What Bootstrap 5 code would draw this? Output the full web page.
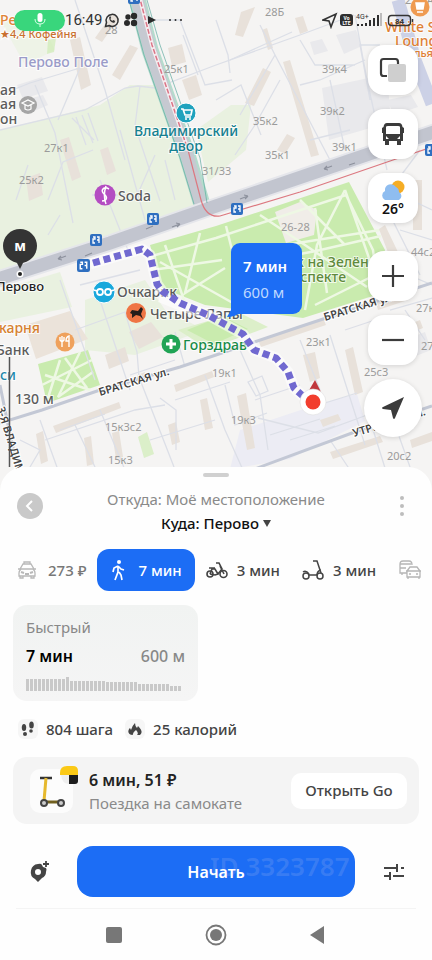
<!DOCTYPE html>
<html lang="ru">
<head>
<meta charset="utf-8">
<meta name="viewport" content="width=device-width, initial-scale=1">
<title>Маршрут до Перово</title>
<link href="https://cdn.jsdelivr.net/npm/bootstrap@5.3.0/dist/css/bootstrap.min.css" rel="stylesheet">
<style>
body{font-family:"Noto Sans","Open Sans",sans-serif;background:#fefefe;color:#111}
button{font-family:inherit}
svg{display:block}
.map-area{min-height:491px}
.map-area>svg{position:absolute;top:0;left:0}
.status-bar{top:8px;left:14px;right:18px;height:24px;font-family:Roboto,"Noto Sans",sans-serif;font-size:15px;color:#333}
.status-icons{margin-left:2px}
.mic{width:51px;height:21px;border-radius:11px;background:#39d67c}
.controls{top:45px;right:10px;gap:14px}
.ctl{width:50px;height:50px;border-radius:16px;background:#fff;border:0;padding:0;box-shadow:0 1px 5px rgba(0,0,0,.14)}
.ctl-round{width:58px;height:58px;border-radius:50%}
.zoom-in{margin-top:14px}
.temp{font-size:14px;line-height:16px;font-weight:600;color:#111}
.callout{left:231px;top:243px;width:71px;height:71px;border-radius:9px 9px 9px 0;background:#1c6df5;color:#fff;font-size:15px;line-height:26px;padding-left:12px;padding-top:10px}
.callout span:first-child{font-weight:600}
.callout span:last-child{color:#bfd9ff}
.sheet{margin-top:-24px;border-radius:24px 24px 0 0;background:#fefefe;padding-top:6px}
.grip{width:26px;height:4px;border-radius:2px;background:#d0d0d0}
.route-head{margin-top:10px;padding:0 17px}
.from-line{font-size:15px;line-height:24px;color:#8a8a8a}
.to-line{font-size:15px;line-height:24px;font-weight:500;color:#111}
.back{width:26px;height:26px;margin-top:6px;border-radius:50%;background:#c9c9c9;border:0;padding:0}
.more{margin-top:7px}
.modes{margin-top:14px;padding-left:6px}
.mode{height:42px;padding:0 11px;border:0;background:none;font-size:15px;font-weight:500;color:#444;border-radius:12px;gap:9px}
.mode-on{background:#1c6df5;color:#fff;padding:0 13px;gap:12px}
.pale{color:#777;gap:11px}
.opt{width:185px;height:96px;margin:14px 13px 0;padding:10px 13px;border:0;border-radius:14px;background:linear-gradient(#f1f3f2,#f5f5f5);text-align:left}
.opt-name{font-size:15px;line-height:24px;color:#888}
.opt-row{margin-top:4px;font-size:16px;line-height:26px}
.opt-time{font-weight:600}
.opt-dist{color:#888;font-weight:500}
.bars{height:14px;margin-top:8px;gap:1px}
.bars i{width:3px;background:#c9c9c9}
.stats{margin-top:16px;padding:0 18px;gap:8px;font-size:15px;line-height:24px;font-weight:500;color:#444}
.chip{width:20px;height:20px;border-radius:6px;background:#f6f6f6}
.chip-next{margin-left:4px}
.ride{margin:16px 13px 0;height:67px;border-radius:14px;background:#f4f4f4;padding:0 12px 0 17px}
.thumb{width:43px;height:44px;border-radius:10px;background:#fcfcfc}
.thumb-badge{top:-3px;right:-5px}
.ride-title{font-size:16px;line-height:24px;font-weight:600;color:#222}
.ride-sub{font-size:15px;line-height:22px;color:#8a8a8a}
.go{height:36px;width:116px;border:0;border-radius:10px;background:#fff;font-size:15px;font-weight:500;color:#444;padding:0}
.actions{margin-top:22px;padding:0 13px;gap:13px}
.side{width:51px;height:51px;border:0;background:none;padding:0}
.start{height:51px;border:0;border-radius:16px;background:#1c6df5;color:#fff;font-size:16px;font-weight:600}
.stamp{left:133px;top:0;font-size:26px;line-height:41px;font-weight:600;color:rgba(110,155,240,.36);white-space:nowrap}
.sys{margin:11px 16px 0;height:52px;border-top:1px solid #f4f4f4;gap:80px}
.sys button{border:0;background:none;padding:0}
.house{font-size:11px;fill:#9b9b9b}
.poi{font-size:14px;font-weight:500;stroke:#fff;stroke-width:2px;stroke-opacity:.75;paint-order:stroke}
.poi-small{font-size:11px}
.poi-station{font-size:13px}
.street{font-size:11px;font-weight:600;fill:#444;stroke:#fff;stroke-width:2px;paint-order:stroke}
</style>
<script src="https://cdn.jsdelivr.net/npm/bootstrap@5.3.0/dist/js/bootstrap.bundle.min.js" defer></script>
</head>
<body>
<main class="d-flex flex-column min-vh-100">
<section class="map-area position-relative flex-grow-1 overflow-hidden" aria-label="Карта">
<svg width="100%" height="100%" viewBox="0 0 432 491" preserveAspectRatio="xMidYMin slice" role="img" aria-label="Пешеходный маршрут к метро Перово">
<defs><symbol id="stop" viewBox="0 0 12 12"><rect width="12" height="12" rx="2" fill="#2f6fc0"/><path d="M3 3h2v2H3v4h2M7 3h2v6M7 6h2" stroke="#fff" stroke-width="1.3" fill="none"/></symbol></defs>
<rect width="432" height="491" fill="#f5f4f3"/>
<!-- soft green blocks -->
<g fill="#e9f1e0">
<path d="M0 130L100 105 130 85 155 85 197 208 0 270z"/><path d="M196 130l35-25 20 0-5 45-38 32z"/>
<path d="M0 290l60-18 12 35-72 15z"/><path d="M85 300l60-20 20 30 40 20-70 25-50-5z"/>
<path d="M0 20h40l15 30-30 15z" opacity=".6"/><path d="M178 330l60-18 30 15-60 22z" fill="#dcefc9"/>
</g>
<path d="M25 325l45-14 18 28-52 20z" fill="#ebe3da"/>
<path d="M240 430l85-28 32-8 8 27-75 38-60 10z" fill="#ececf4"/>
<!-- parks -->
<g fill="#c9ebae"><path d="M150 245L216 226 349 182 385 250 376 295 303 318 205 305 162 288z"/><path d="M38 364l50-14 12 35-53 18z"/><path d="M187 330l35-14 26 13-34 15z"/><path d="M138 437l9-5 7 22-10 4zM48 40l8-2-2 14-7 2z" opacity=".6"/></g>
<path d="M275 212l25-10 17 8-3 25-28 8z" fill="#f0ede8"/>
<g stroke="#eef8e4" stroke-width="2.5" fill="none">
<path d="M152 256l64-18 130-43 27 55 5 35M160 262l80 45M165 245l20 58M200 233l-15 60 40-25M226 226l10 40 80-15 65-15M315 208l12 85M345 190l-28 55-12 65M260 215l45 30 62 42M285 245l95-15M345 190l30 85-60 30M152 270l70-10M300 200l45 45"/>
<path d="M45 375l45 15M60 360l-12 38M80 352l-22 45 35-25M42 385l50-25M65 358l22 30"/>
</g>
<!-- buildings -->
<g fill="#e8e1da">
<path d="M26 178l14-5 3 22-14 6zM70 40l10-3 11 48-10 5zM112 75l18-30 8 3-18 32zM95 38l17-24 7 4-17 24zM168 48l14-4 4 18-14 4zM182 80l14-5 6 20-13 5zM60 140l9-3 12 40-9 4zM100 150l8-3 8 24-9 4z"/>
<path d="M245 103l18-35 8 4-17 34zM283 62l7-2 29 95-8 2zM241 12l14-5-12 30-8-2zM295 18l8-2 5 15-8 3zM277 150l10-16 8 4-10 16zM262 30l5-2 6 20-5 2z"/>
<path d="M53 426l66-24 2 6-65 25zM174 385l38-14 2 6-38 15zM129 332l22-10 12 15-24 12zM36 434l7-3 5 30-7 3zM84 438l7-2 3 28-7 2zM112 433l7-2 4 26-7 2zM168 425l8-3 4 20-8 3zM133 377l12-5 3 8-12 5zM105 355l20-8 4 14-20 8z"/>
<path d="M237 396l9-3 9 55-8 2zM258 340l65-22 3 7-65 22zM303 355l12-3 5 26-10 4zM345 350l8-3 10 45-8 3zM200 400l7-2 6 30-8 2zM320 420l18-6 3 6-18 7zM330 452l50-16 3 6-50 17zM370 448l40-12M385 225l12 25 16 40-8 3-16-38-10-26zM413 180h9v50h-9zM375 300l30-10 3 10-30 10zM395 330l25-10 3 8-25 10zM410 440l22-8v9l-20 7z"/>
</g>
<g fill="#e9e9ec"><path d="M336 35l20-5 6 16-18 8zM310 42l12-3 6 12-14 4zM322 88l65-14 4 48-62 18zM17 85l25-8 6 14-25 8zM25 100l18-5 5 10-18 8zM405 340l20-8 6 18-20 8zM387 100l24-5 7 12-24 8z"/></g>
<!-- yard lanes -->
<g stroke="#dcdfe7" stroke-width="1.3" fill="none">
<path d="M0 130L85 110 125 88 138 86 155 88 216 65 300 35 354 15M0 95l30-12 50-15M75 0l30 90 20 70M80 68l-22 52M35 85l20 48 18 90M140 86l-5 40 25 75M150 20l30 0 25 65 27-5M183 35l15 40"/>
<path d="M72 118l22 22M76 117l10 28M82 115l11 28M88 113l10 28"/>
<path d="M48 200l15-38 30-12M16 200l12-35M60 215l-12 20M100 180l30 75M120 130l25 90M155 155l-20 45M165 160l10 40M92 195l35 0"/>
<path d="M216 20l12 35 2 18M260 25l15 30 55 105M275 55l-35 60M300 40l15 25 40 0M355 15l12 65 20 90M300 85l20-5 45-20M380 45l-20 0 10 55M280 80l-25 45-20 30M330 80l15 70M230 60l62-28M310 140l40-10M216 100l25-15 20 50M390 175l0 40 30 60M420 150l-30 40 42 20M400 230l32 10M385 265l47 20M390 310l42-12M405 310l20 30"/>
<path d="M60 280l35 100M75 330l50-18 12 40 2 25 35 90M100 300l30 90M130 375l45-15M80 285l60-15M40 420l18 50M60 430l45-16M75 425l20 42M100 410l25 60M45 440l90-30 30-5M150 440l65-20M175 400l55-18M160 398l16 12 0 40M20 440l20 10-10 17M185 367l-10-35M205 375l20 55 18 40M225 385l10 40 32-12M240 350l20 45 8 55M248 382l14-6 6 15-12 5zM330 335l35 110M345 330l30-10M255 400l45-15M258 418l60 15 60-22M325 403l32-10M270 435l50-16M290 440l45-14M330 440l20 30M370 420l15 48M395 425l15 42M300 340l20 50"/>
</g>
<g stroke="#c3c8d5" stroke-width="3" fill="none"><path d="M0 423L42 410 100 390 180 367 216 355 296 328 432 283"/><path d="M252 470L352 433 432 406M0 385L8 425 18 470"/></g>
<!-- avenues -->
<path d="M398 0L415 60 432 104" stroke="#ccd1e6" stroke-width="13" fill="none"/>
<path d="M136 -5L150 50 187 155 203 208" stroke="#b4dccd" stroke-width="17" fill="none"/>
<path d="M136 -5L150 50 187 155 203 212" stroke="#c6c9d1" stroke-width="13" fill="none"/>
<path d="M-5 280L110 243 216 206 369 154 440 130" stroke="#e5e6eb" stroke-width="17" fill="none"/>
<path d="M-5 280L110 243 216 206 369 154 440 130" stroke="#c2c5cf" stroke-width="13" fill="none"/>
<path d="M139 -5L152 45 188 150" stroke="#f4edf0" stroke-width="4" fill="none"/>
<path d="M139 -5L152 45 188 150" stroke="#dc7486" stroke-width="1.5" stroke-dasharray="5 2" fill="none"/>
<path d="M188 150L201 200Q206 218 220 216L300 192 393 160 432 147" stroke="#dc7880" stroke-width="1.2" fill="none"/>
<path d="M147 0L160 45 200 158 207 203" stroke="#5eaaa0" stroke-width=".7" fill="none"/><path d="M129 0L144 55 180 158 194 204" stroke="#5eaaa0" stroke-width=".7" fill="none"/>
<g stroke="#8d919d" stroke-width="1.2" fill="none"><path d="M58 259l8-3m-8 3l3-3m-3 3l4 1M172 227l8-3m0 0l-4-1m4 1l-3 3M324 169l8-3m-8 3l3-3m-3 3l4 1M240 199l8-3m0 0l-4-1m4 1l-3 3M85 256l7-3M146 229l7-3M349 165l6-2"/></g>
<use href="#stop" x="128" y="-8" width="12" height="12"/><use href="#stop" x="147" y="213" width="12" height="12"/><use href="#stop" x="90" y="234" width="12" height="12"/><use href="#stop" x="231" y="203" width="12" height="12"/><use href="#stop" x="425" y="144" width="12" height="12"/>
<!-- house numbers -->
<g class="house">
<text x="105" y="34">28</text><text x="265" y="16">28Б</text><text x="164" y="73">25к1</text><text x="44" y="152">27к1</text><text x="19" y="184">25к2</text><text x="202" y="175">31/33</text><text x="322" y="73">39к4</text><text x="320" y="115">39к2</text><text x="253" y="125">35к2</text><text x="265" y="159">35к1</text><text x="332" y="151">39к1</text><text x="281" y="231">26-28</text><text x="411" y="256">44с2</text><text x="306" y="346">23к1</text><text x="212" y="377">19к1</text><text x="364" y="376">25с3</text><text x="231" y="424">19к3</text><text x="105" y="431">15к3с2</text><text x="108" y="464">15к3</text><text x="387" y="460">20с2</text><text x="416" y="312">27к4</text><text x="421" y="350">27</text><text x="405" y="4">2 18А</text>
</g>
<!-- streets -->
<g class="street"><text transform="translate(100 396) rotate(-17)">БРАТСКАЯ ул.</text><text transform="translate(325 321) rotate(-17)">БРАТСКАЯ ул.</text><text transform="translate(354 437) rotate(-17)">УТРЕННЯЯ ул.</text><text transform="translate(-3 408) rotate(73)">3-Я ВЛАДИМИРСКАЯ</text></g>
<!-- places -->
<g class="poi">
<text x="0" y="25" fill="#e08338">Ре</text><text x="0" y="38" fill="#c9702f" class="poi-small">★4,4 Кофейня</text>
<text x="18" y="67" fill="#9a9bc8">Перово Поле</text>
<g fill="#5b5b5b"><text x="0" y="95">ая</text><text x="0" y="109">ая</text><text x="0" y="124">он</text><text x="118" y="201">Soda</text><text x="117" y="297">Очкарик</text><text x="150" y="319">Четыре Лапы</text><text x="-4" y="355">Банк</text></g>
<g fill="#15808f" text-anchor="middle"><text x="186" y="136">Владимирский</text><text x="186" y="151">двор</text></g>
<text x="0" y="380" fill="#1c87ab">си</text><text x="-1" y="333" fill="#d6802f">карня</text><text x="183" y="350" fill="#188b47">Горздрав</text>
<g fill="#5f8a3c"><text x="269" y="267">Парк на Зелёном</text><text x="346" y="282" text-anchor="end">проспекте</text></g>
<g fill="#df8034"><text x="385" y="32">White Story</text><text x="395" y="46">Lounge</text><text x="414" y="57" class="poi-small">лья</text></g>
</g>
<!-- walking route -->
<g fill="none" stroke-linejoin="round"><path d="M90 264L142 249 150 255 157 284 162 291M160 297L180 305 208 315 228 326 243 334 254 350 276 358 288 372 294 388 304 397" stroke="#fff" stroke-width="11" stroke-opacity=".55"/><path d="M93 263L142 249 150 255 157 284 162 291 180 303 208 315 228 326 243 334 254 350 276 358 288 372 294 388 304 397" stroke="#7169d0" stroke-width="7" stroke-dasharray="7 4"/></g>
<use href="#stop" x="77" y="259" width="13" height="13"/>
<!-- place marks -->
<circle cx="28" cy="105" r="9" fill="#a5a5a5"/><path d="M22 103l6-3 6 3-6 3zM25 105v4q3 2 6 0v-4" fill="none" stroke="#fff" stroke-width="1.2"/>
<circle cx="186" cy="113" r="10" fill="#1fa2bd" stroke="#fff"/><path d="M181 109h2l2 6h6l1-5h-8M185 117h6" stroke="#fff" stroke-width="1.7" fill="none"/><circle cx="186" cy="119" r="1" fill="#fff"/><circle cx="190" cy="119" r="1" fill="#fff"/>
<circle cx="105" cy="195" r="10.500" fill="#b44dc2"/><path d="M109 189c-5-3-9 1-5 5 4 3 3 7-2 7M106 186c-2 6-2 13 0 18" stroke="#fff" stroke-width="1.5" fill="none"/>
<circle cx="104" cy="292" r="11" fill="#18a8dc" stroke="#fff"/><g fill="none" stroke="#fff" stroke-width="1.8"><circle cx="100" cy="292" r="3"/><circle cx="108" cy="292" r="3"/><path d="M94 290l3 1M114 290l-3 1"/></g>
<circle cx="136" cy="313" r="10" fill="#ef7544"/><path d="M130 313l2-3 6 1 3-4 2 2-2 5 2 5-3-3-4-1-4 3v-4z" fill="#251c1a"/>
<circle cx="171" cy="344" r="9.500" fill="#20a455"/><path d="M171 339v10M166 344h10" stroke="#fff" stroke-width="3"/>
<circle cx="65" cy="342" r="9.500" fill="#efa15c"/><path d="M62 336v11M60 337v3q2 3 4 0v-3M69 347v-11q-3 1-3 5h3" stroke="#fff" stroke-width="1.4" fill="none"/>
<circle cx="420" cy="7" r="9.500" fill="#ef9b51"/><path d="M416 3h8l-1 6h-6zM417 12h6" stroke="#fff" stroke-width="1.5" fill="#fff"/>
<!-- metro pin -->
<circle cx="20" cy="246" r="17" fill="#343434"/><path d="M16 261l4 8 4-8" fill="#343434"/><text x="20" y="251" text-anchor="middle" font-size="14" font-weight="700" fill="#fff">м</text><circle cx="20" cy="274" r="3.500" fill="#fff"/><circle cx="20" cy="274" r="2" fill="#222"/>
<text x="-4" y="291" class="poi poi-station" fill="#222">Перово</text>
<!-- scale -->
<path d="M9.500 357v110" stroke="#555" stroke-width="1.5"/><text x="15" y="404" class="poi" fill="#5b5b5b">130 м</text>
<!-- current position -->
<path d="M315 380l-7 12h13z" fill="#c0373c"/><circle cx="313" cy="402" r="13" fill="#fff" stroke="#ddd" stroke-width=".6"/><circle cx="313" cy="402" r="7.500" fill="#f23e2e"/>
<path d="M231 302v8l-4 7q8 0 12-4z" fill="#1c6df5"/>
</svg>
<div class="callout position-absolute d-flex flex-column"><span>7 мин</span><span>600 м</span></div>
<div class="status-bar position-absolute d-flex align-items-center">
<span class="mic d-flex align-items-center justify-content-center"><svg width="12" height="14" viewBox="0 0 12 14"><rect x="3.500" width="5" height="9" rx="2.500" fill="#fff"/><path d="M1 6q0 5 5 5t5-5M6 11v3" stroke="#d8ffe8" fill="none"/></svg></span>
<span>16:49</span>
<svg class="status-icons" width="80" height="16" viewBox="0 0 80 16"><path d="M1.500 14.500l1-4a6 6 0 1 1 2.500 3z" fill="none" stroke="#333" stroke-width="1.500"/><path d="M5.200 5q-.5 5 5 6l1-2-2-1-1 1-2-2 1-1-1-2z" fill="#333"/><g fill="#2a2a2a"><circle cx="24" cy="5" r="2.700"/><circle cx="30" cy="4" r="3.200"/><circle cx="23" cy="11" r="3"/><circle cx="30" cy="11" r="3.200"/><path d="M44 4l8 4-8 4z"/><circle cx="66" cy="8" r="1"/><circle cx="71.500" cy="8" r="1"/><circle cx="77" cy="8" r="1"/></g></svg>
<svg class="ms-auto" width="92" height="18" viewBox="0 0 92 18"><path d="M1 9L14 3 9 16 7 10z" fill="none" stroke="#333" stroke-width="1.600"/><rect x="18" y="3" width="13" height="12" rx="3" fill="#2e2e2e"/><text x="24.500" y="8.500" font-size="5" font-weight="700" fill="#fff" text-anchor="middle">Vo</text><text x="24.500" y="13.500" font-size="5" font-weight="700" fill="#fff" text-anchor="middle">LTE</text><text x="34" y="8" font-size="7" fill="#333">4G+</text><path d="M36 15v-2M40 15v-2M44 15v-3M48 15V9M52 15V7M56 15V4" stroke="#2e2e2e" stroke-width="2"/><path d="M59 15V2" stroke="#aaa" stroke-width="1.500"/><rect x="66.500" y="4.500" width="22" height="10" rx="3" fill="none" stroke="#333" stroke-width="1.400"/><path d="M90.500 8v3" stroke="#333" stroke-width="1.500"/><text x="77.500" y="12.500" font-size="8" font-weight="700" fill="#333" text-anchor="middle">84</text></svg>
</div>
<div class="controls position-absolute d-flex flex-column align-items-center">
<button class="ctl d-grid" aria-label="Слои"><svg class="m-auto" width="28" height="28" viewBox="0 0 28 28"><rect x="9" y="8" width="18" height="18" rx="2" fill="#cfcfcf"/><path d="M8 20H4.500Q2 20 2 17.500v-12Q2 3 4.500 3h12Q19 3 19 6v2" fill="none" stroke="#3b3b3b" stroke-width="2.200"/></svg></button>
<button class="ctl d-grid" aria-label="Транспорт"><svg class="m-auto" width="24" height="24" viewBox="0 0 24 24"><path fill-rule="evenodd" fill="#3b3b3b" d="M6 1h12q3 0 3.500 4L23 6v5h-1v8h-2v4h-4v-4H8v4H4v-4H2v-8H1V6l1.500-1Q3 1 6 1zM5 5v7h14V5q0-1-2-1H7Q5 4 5 5zM5 14v3h3zM19 14v3h-3z"/></svg></button>
<button class="ctl d-flex flex-column align-items-center justify-content-center" aria-label="Погода, 26 градусов"><svg width="26" height="21" viewBox="0 0 26 21"><circle cx="18" cy="7" r="6.500" fill="#f5ad25"/><path d="M5 20a5 5 0 0 1 0-9 6 6 0 0 1 11-4 5.500 5.500 0 0 1 3 5 4.500 4.500 0 0 1 0 8z" fill="#8fbdf0"/></svg><span class="temp">26°</span></button>
<button class="ctl zoom-in d-grid" aria-label="Приблизить"><svg class="m-auto" width="24" height="24" viewBox="0 0 24 24"><path d="M12 1v22M1 12h22" stroke="#3b3b3b" stroke-width="2.200"/></svg></button>
<button class="ctl d-grid" aria-label="Отдалить"><svg class="m-auto" width="24" height="24" viewBox="0 0 24 24"><path d="M1 12h22" stroke="#3b3b3b" stroke-width="2.200"/></svg></button>
<button class="ctl ctl-round d-grid" aria-label="Моё местоположение"><svg class="m-auto" width="24" height="24" viewBox="0 0 24 24"><path d="M23 1L2 11q-2 1 0 2l8 1 2 8q1 2 2 0z" fill="#3b3b3b"/></svg></button>
</div>
</section>

<section class="sheet position-relative">
<div class="grip mx-auto"></div>
<header class="route-head d-flex align-items-start justify-content-between">
<button class="back d-grid" aria-label="Назад"><svg class="m-auto" width="10" height="12" viewBox="0 0 10 12"><path d="M7 1L2 6l5 5" fill="none" stroke="#fff" stroke-width="2"/></svg></button>
<div class="text-center"><div class="from-line">Откуда: Моё местоположение</div><div class="to-line">Куда: Перово <svg class="d-inline" width="8" height="16" viewBox="0 0 8 16"><path d="M0 3h8l-4 7z" fill="#444"/></svg></div></div>
<button class="more btn p-0 border-0" aria-label="Ещё"><svg width="26" height="24" viewBox="0 0 26 24"><g fill="#bdbdbd"><circle cx="13" cy="4" r="2"/><circle cx="13" cy="12" r="2"/><circle cx="13" cy="20" r="2"/></g></svg></button>
</header>
<nav class="modes d-flex overflow-hidden" aria-label="Способ передвижения">
<button class="mode pale d-flex align-items-center flex-shrink-0"><svg width="20" height="18" viewBox="0 0 20 18"><g fill="none" stroke="#b8b8b8" stroke-width="1.300"><path d="M7 3V1h6v2M1 8h2l3-5h8l3 5h2M4 8h12q2 2 2 4v3H2v-3q0-2 2-4zM3 15v2h3v-2M14 15v2h3v-2"/><path d="M4 11l3 1M16 11l-3 1M8 13h4" stroke-width="2"/></g></svg><span>273 ₽</span></button>
<button class="mode mode-on d-flex align-items-center flex-shrink-0" aria-pressed="true"><svg width="16" height="22" viewBox="0 0 16 22"><circle cx="9" cy="3" r="2" fill="#fff"/><path d="M8 7L4 9l-1 4M8 7v6l-3 8M8 7l3 3 3 1M9 13l2 3 1 5M8 9v4" stroke="#fff" stroke-width="1.700" fill="none"/></svg><span>7 мин</span></button>
<button class="mode d-flex align-items-center flex-shrink-0"><svg width="22" height="20" viewBox="0 0 22 20"><g fill="none" stroke="#444" stroke-width="1.600"><circle cx="4" cy="14" r="3"/><circle cx="17.500" cy="14" r="3.500"/><path d="M4 14l2-5h3l3 5-3 1-5-1M12 14l4-5-3-6h-3M14 6l4 8M3 8h6"/></g></svg><span>3 мин</span></button>
<button class="mode d-flex align-items-center flex-shrink-0"><svg width="22" height="20" viewBox="0 0 22 20"><g fill="none" stroke="#444" stroke-width="1.500"><circle cx="4" cy="16" r="3"/><circle cx="18" cy="16" r="3"/><path d="M11 1h4l4 12M7 15h8q0-4 4-5M1 12q3-2 6 2"/></g></svg><span>3 мин</span></button>
<button class="mode d-flex align-items-center flex-shrink-0" aria-label="Такси и транспорт"><svg width="24" height="20" viewBox="0 0 24 20"><g fill="none" stroke="#b5b5b5" stroke-width="1.300"><path d="M9 13H2V4q0-3 3-3h6q3 0 3 4M2 4h11M4 13v2M8 8h-6"/><path d="M9 11l3-4h7l3 4v6H9zM8 11h15M10 17v2M21 17v2M11 14h2M18 14h2"/></g></svg></button>
</nav>
<button class="opt d-block">
<span class="opt-name d-block">Быстрый</span>
<span class="opt-row d-flex justify-content-between"><span class="opt-time">7 мин</span><span class="opt-dist">600 м</span></span>
<span class="bars d-flex align-items-end" id="bars"></span>
</button>
<div class="stats d-flex align-items-center">
<span class="chip d-grid"><svg class="m-auto" width="14" height="16" viewBox="0 0 14 16"><g fill="#444"><ellipse cx="3" cy="6.500" rx="2.200" ry="3.500"/><ellipse cx="4" cy="13" rx="2" ry="2"/><ellipse cx="10.500" cy="4" rx="2.300" ry="3.500"/><ellipse cx="10" cy="10" rx="1.800" ry="1.800"/></g></svg></span><span>804 шага</span>
<span class="chip chip-next d-grid"><svg class="m-auto" width="14" height="14" viewBox="0 0 14 14"><path d="M5 13C0 13-1 9 2 6l1 2Q4 4 7 1q0 3 2 5l1-2q6 6 2 9H9q2-2-1-5-4 3-3 5z" fill="#444"/></svg></span><span>25 калорий</span>
</div>
<article class="ride d-flex align-items-center">
<div class="thumb position-relative flex-shrink-0"><svg width="43" height="44" viewBox="0 0 43 44"><path d="M10 9h12" stroke="#333" stroke-width="2.500"/><path d="M16 9l-2 23" stroke="#e6b92e" stroke-width="3"/><path d="M15 33h16" stroke="#71601f" stroke-width="3"/><circle cx="14" cy="34" r="3" fill="#ccc" stroke="#444" stroke-width="2"/><circle cx="31" cy="34" r="3" fill="#ccc" stroke="#444" stroke-width="2"/></svg><svg class="thumb-badge position-absolute" width="18" height="18" viewBox="0 0 18 18"><path d="M0 9V7Q0 0 7 0h6q5 0 5 5v4z" fill="#fbc916"/><path d="M9 9h9v6q0 3-3 3H9z" fill="#1c1c1c"/><path d="M1 9h8v9Q2 18 1 9z" fill="#eee"/></svg></div>
<div class="ms-3 me-auto"><div class="ride-title">6 мин, 51 ₽</div><div class="ride-sub">Поездка на самокате</div></div>
<button class="go">Открыть Go</button>
</article>
<div class="actions d-flex">
<button class="side d-grid flex-shrink-0" aria-label="Добавить точку"><svg class="m-auto" width="20" height="22" viewBox="0 0 20 22"><path fill-rule="evenodd" d="M9 3Q12 2 13 4l1 2 3 1q1 1 0 4 0 4-4 6l-4 4-3-3A8 8 0 0 1 9 3zM9 8a3 3 0 1 1 0 6 3 3 0 0 1 0-6z" fill="#444"/><path d="M17 0v6M14 3h6" stroke="#444" stroke-width="1.800"/></svg></button>
<button class="start position-relative flex-grow-1 overflow-hidden p-0"><span class="stamp position-absolute">ID 3323787</span><span class="position-relative">Начать</span></button>
<button class="side d-grid flex-shrink-0" aria-label="Параметры"><svg class="m-auto" width="20" height="18" viewBox="0 0 20 18"><path d="M0 5h13M17 5h3M13 1v8M0 13h6M9 13h11M6 9v8" stroke="#444" stroke-width="2"/></svg></button>
</div>
<footer class="sys d-flex justify-content-center align-items-center">
<button aria-label="Недавние приложения"><svg width="22" height="22" viewBox="0 0 22 22"><rect x="3" y="3" width="16" height="16" rx="2" fill="#777"/></svg></button>
<button aria-label="Домой"><svg width="22" height="22" viewBox="0 0 22 22"><circle cx="11" cy="11" r="9.500" fill="none" stroke="#777" stroke-width="1.800"/><circle cx="11" cy="11" r="6" fill="#777"/></svg></button>
<button aria-label="Назад в системе"><svg width="22" height="22" viewBox="0 0 22 22"><path d="M17 2v18L3 11z" fill="#777"/></svg></button>
</footer>
</section>
</main>
<script>
const profile=[...Array(10).fill(12),14,...Array(9).fill(10),...Array(8).fill(9),...Array(8).fill(7),5,5,5];
const bars=document.getElementById('bars');
profile.forEach(h=>{const b=document.createElement('i');b.style.height=h+'px';bars.append(b);});
</script>
</body>
</html>
